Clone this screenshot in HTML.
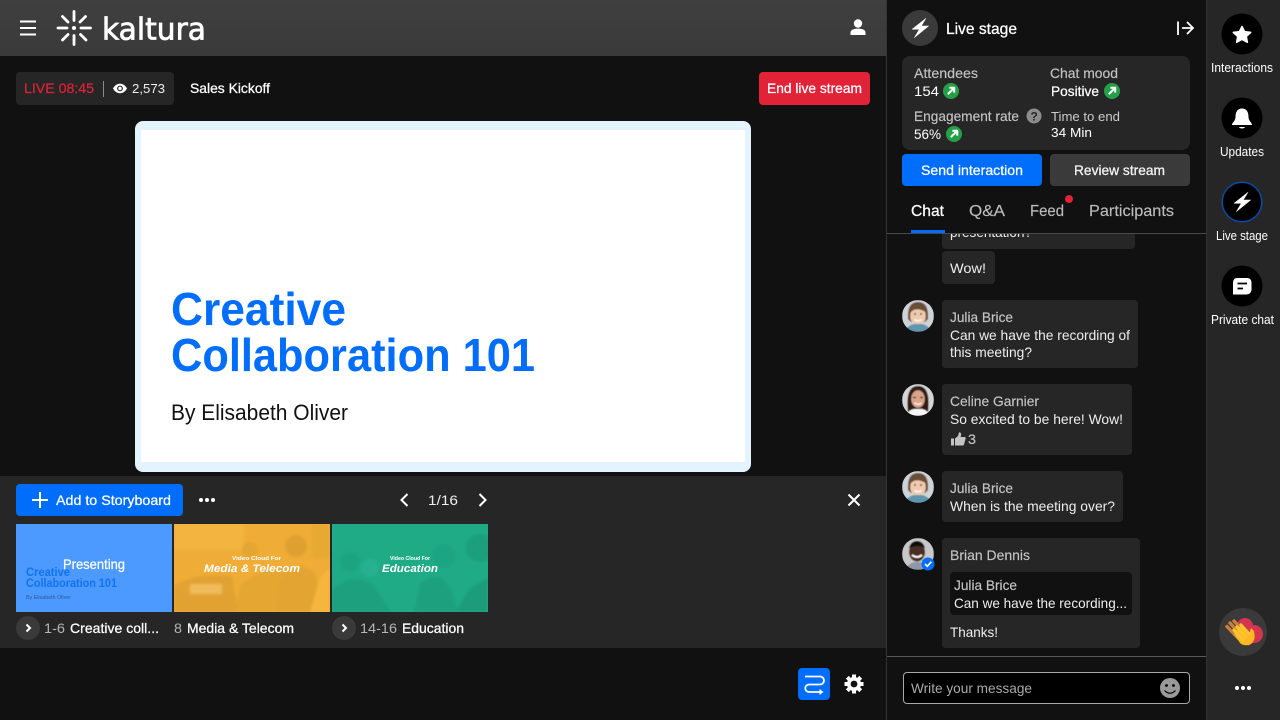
<!DOCTYPE html>
<html lang="en"><head><meta charset="utf-8"><title>Kaltura Live</title>
<style>
html,body{margin:0;padding:0;width:1280px;height:720px;overflow:hidden;background:#111}
svg{display:block}
text{font-family:"Liberation Sans",Arial,sans-serif;font-size:14px;fill:#fff;white-space:pre}
.m{stroke:#fff;stroke-width:.25}
.g{fill:#c4c4c4;stroke:#c4c4c4;stroke-width:.15}
.b{font-weight:bold}
.s13{font-size:13px}.s12{font-size:13px}.s16{font-size:16px}
</style></head><body>
<svg width="1280" height="720" viewBox="0 0 1280 720" xmlns="http://www.w3.org/2000/svg">
<defs>
<linearGradient id="hd" x1="0" y1="0" x2="0" y2="1"><stop offset="0" stop-color="#3f3f3f"/><stop offset="1" stop-color="#3a3a3a"/></linearGradient>
<filter id="bl" x="-10%" y="-10%" width="120%" height="120%"><feGaussianBlur stdDeviation="0.45"/></filter>
<filter id="bl2" x="-10%" y="-10%" width="120%" height="120%"><feGaussianBlur stdDeviation="1.2"/></filter>
<clipPath id="chatclip"><rect x="887" y="234" width="319" height="422"/></clipPath>
<clipPath id="a1"><circle cx="918" cy="316" r="16"/></clipPath>
<clipPath id="a2"><circle cx="918" cy="400" r="16"/></clipPath>
<clipPath id="a3"><circle cx="918" cy="487" r="16"/></clipPath>
<clipPath id="a4"><circle cx="918" cy="554" r="16"/></clipPath>
<clipPath id="t2"><rect x="174" y="524" width="156" height="88"/></clipPath>
<clipPath id="t3"><rect x="332" y="524" width="156" height="88"/></clipPath>
<g id="up"><path d="M-3.2 3.2L3 -3M-1.6 -3.200H3.200V1.600" fill="none" stroke="#fff" stroke-width="2"/></g>
<g id="julia"><rect x="-16" y="-16" width="32" height="32" fill="#cdd3d8"/>
<path d="M-10 3Q-11 -14 0 -14T10 3L7 6H-7Z" fill="#6b4d36"/>
<ellipse cx="0" cy="0" rx="7.800" ry="9.800" fill="#efc9ae"/>
<path d="M-7.800 -3Q-3 -10 7.800 -4Q5 -12 -1 -12Q-8 -10 -7.800 -3Z" fill="#6b4d36"/>
<circle cx="-3" cy="-2" r=".9" fill="#3a2a20"/><circle cx="3" cy="-2" r=".9" fill="#3a2a20"/>
<path d="M-14 16Q-10 9 -4 8H4Q10 9 14 16Z" fill="#5f95ad"/>
<path d="M-3.500 3.500Q0 6 3.500 3.500" stroke="#fff" stroke-width="1.500" fill="none"/></g>
</defs>

<rect width="1280" height="720" fill="#111"/>
<!-- header -->
<rect width="886" height="56" fill="url(#hd)"/>
<path d="M20 21.500H36M20 28H36M20 34.500H36" stroke="#fff" stroke-width="2"/>
<g stroke="#fff" stroke-width="2.800" stroke-linecap="round">
<path d="M74 11.500V20.500M74 35.500V44.500M58 28H67M81 28H90.500M62.500 16.500L68 22M80.500 34.500L86 40M62.500 40L68 34.500M80 22L85.500 16.500"/>
</g>
<circle cx="74" cy="28" r="2" fill="#fff"/>
<text x="102" y="39.500" style="font-family:'DejaVu Sans',sans-serif;font-size:30px;stroke:#fff;stroke-width:.7" textLength="104" lengthAdjust="spacingAndGlyphs">kaltura</text>
<circle cx="858" cy="23.500" r="4.200" fill="#fff"/>
<path d="M850.500 35V32.500C850.500 29.800 854 28.600 858 28.600S865.500 29.800 865.500 32.500V35Z" fill="#fff"/>

<!-- live bar -->
<rect x="16" y="72" width="158" height="33" rx="4" fill="#262626"/>
<text x="24" y="93" style="fill:#e12237;stroke:#e12237;stroke-width:.2" textLength="70" lengthAdjust="spacingAndGlyphs">LIVE 08:45</text>
<rect x="103" y="81" width="1" height="16" fill="#8a8a8a"/>
<path d="M113 88.500C115 85 117.500 83.800 120 83.800S125 85 127 88.500C125 92 122.500 93.200 120 93.200S115 92 113 88.500Z" fill="#fff"/>
<circle cx="120" cy="88.500" r="2.900" fill="#262626"/><circle cx="120" cy="88.500" r="1.700" fill="#fff"/>
<text x="132" y="93" class="s13" style="fill:#eee" textLength="33" lengthAdjust="spacingAndGlyphs">2,573</text>
<text x="190" y="93" class="m" textLength="80" lengthAdjust="spacingAndGlyphs">Sales Kickoff</text>
<rect x="759" y="72" width="111" height="33" rx="4" fill="#e12237"/>
<text x="767" y="93" class="m" textLength="95" lengthAdjust="spacingAndGlyphs">End live stream</text>

<!-- slide -->
<rect x="135" y="121" width="616" height="351" rx="8" fill="#e3f4fe"/>
<rect x="141" y="130" width="604" height="332" fill="#fff"/>
<text x="171" y="325" class="b" style="font-size:46px;fill:#006efa" textLength="175" lengthAdjust="spacingAndGlyphs">Creative</text>
<text x="171" y="371" class="b" style="font-size:46px;fill:#006efa" textLength="364" lengthAdjust="spacingAndGlyphs">Collaboration 101</text>
<text x="171" y="420" style="font-size:22px;fill:#111" textLength="177" lengthAdjust="spacingAndGlyphs">By Elisabeth Oliver</text>

<!-- storyboard strip -->
<rect x="0" y="476" width="886" height="172" fill="#262626"/>
<rect x="16" y="484" width="167" height="32" rx="4" fill="#006efa"/>
<path d="M40 492V508M32 500H48" stroke="#fff" stroke-width="2"/>
<text x="56" y="505" class="m" textLength="115" lengthAdjust="spacingAndGlyphs">Add to Storyboard</text>
<circle cx="201" cy="500" r="2" fill="#fff"/><circle cx="207" cy="500" r="2" fill="#fff"/><circle cx="213" cy="500" r="2" fill="#fff"/>
<path d="M407.500 494L401.500 500L407.500 506M479.500 494L485.500 500L479.500 506" fill="none" stroke="#fff" stroke-width="2"/>
<text x="428" y="505" style="fill:#eee" textLength="30" lengthAdjust="spacingAndGlyphs">1/16</text>
<path d="M848.500 494.500L859.500 505.500M859.500 494.500L848.500 505.500" stroke="#fff" stroke-width="2"/>

<!-- thumb 1 -->
<rect x="16" y="524" width="156" height="88" fill="#4c9aff"/>
<text x="26" y="576" class="b" style="font-size:11.500px;fill:#1272f0" textLength="44" lengthAdjust="spacingAndGlyphs">Creative</text>
<text x="26" y="587" class="b" style="font-size:11.500px;fill:#1272f0" textLength="91" lengthAdjust="spacingAndGlyphs">Collaboration 101</text>
<text x="26" y="599" style="font-size:5.500px;fill:#2b5a9c" textLength="45" lengthAdjust="spacingAndGlyphs">By Elisabeth Oliver</text>
<text x="63" y="569" class="m" textLength="62" lengthAdjust="spacingAndGlyphs">Presenting</text>

<!-- thumb 2 -->
<rect x="174" y="524" width="156" height="88" fill="#efad37"/>
<g clip-path="url(#t2)"><g filter="url(#bl2)">
<rect x="174" y="524" width="70" height="26" fill="#f3b440"/>
<path d="M174 585Q200 572 232 576L238 612H174Z" fill="#e2a232"/>
<path d="M236 612L240 585Q262 566 290 570L306 612Z" fill="#e6a633"/>
<circle cx="296" cy="546" r="11" fill="#dfa030"/>
<path d="M280 582Q294 556 316 574L322 612H276Z" fill="#e4a432"/>
<circle cx="250" cy="550" r="8" fill="#e5a533"/>
<rect x="312" y="524" width="18" height="34" fill="#e8a932"/>
<path d="M320 578L330 568V612H310Z" fill="#f6b63c"/>
<rect x="190" y="584" width="32" height="10" fill="#f1bb5a"/>
</g></g>
<text x="232" y="560" class="b" style="font-size:5px" textLength="49" lengthAdjust="spacingAndGlyphs">Video Cloud For</text>
<text x="204" y="572" class="b" style="font-size:11px;font-style:italic" textLength="96" lengthAdjust="spacingAndGlyphs">Media &amp; Telecom</text>

<!-- thumb 3 -->
<rect x="332" y="524" width="156" height="88" fill="#20ab87"/>
<g clip-path="url(#t3)"><g filter="url(#bl2)">
<path d="M332 612V590Q350 572 372 584L392 612Z" fill="#1ca07d"/>
<circle cx="350" cy="562" r="10" fill="#1da481"/>
<circle cx="370" cy="568" r="9" fill="#27b08d"/>
<path d="M414 612L420 584Q440 566 452 592L458 612Z" fill="#1ba07e"/>
<circle cx="444" cy="556" r="12" fill="#1da582"/>
<circle cx="480" cy="548" r="14" fill="#1a9f7d"/>
<path d="M455 612L470 588L488 578V612Z" fill="#1a9c7a"/>
</g></g>
<text x="390" y="560" class="b" style="font-size:5px" textLength="40" lengthAdjust="spacingAndGlyphs">Video Cloud For</text>
<text x="382" y="572" class="b" style="font-size:11px;font-style:italic" textLength="56" lengthAdjust="spacingAndGlyphs">Education</text>

<!-- thumb labels -->
<circle cx="28" cy="628" r="12" fill="#3a3a3a"/>
<path d="M26.500 624.500L30 628L26.500 631.500" fill="none" stroke="#fff" stroke-width="2"/>
<text x="44" y="633" style="fill:#b5b5b5" textLength="21" lengthAdjust="spacingAndGlyphs">1-6</text>
<text x="70" y="633" class="m" textLength="89" lengthAdjust="spacingAndGlyphs">Creative coll...</text>
<text x="174" y="633" style="fill:#b5b5b5" textLength="8" lengthAdjust="spacingAndGlyphs">8</text>
<text x="187" y="633" class="m" textLength="107" lengthAdjust="spacingAndGlyphs">Media &amp; Telecom</text>
<circle cx="344" cy="628" r="12" fill="#3a3a3a"/>
<path d="M342.500 624.500L346 628L342.500 631.500" fill="none" stroke="#fff" stroke-width="2"/>
<text x="360" y="633" style="fill:#b5b5b5" textLength="37" lengthAdjust="spacingAndGlyphs">14-16</text>
<text x="402" y="633" class="m" textLength="62" lengthAdjust="spacingAndGlyphs">Education</text>

<!-- bottom controls -->
<rect x="798" y="668" width="32" height="32" rx="4" fill="#006efa"/>
<path d="M805 676.500H820A4 4 0 0 1 820 684.500H809A3.700 3.700 0 0 0 809 692H820" fill="none" stroke="#fff" stroke-width="1.800"/>
<path d="M819.500 689L823.500 692L819.500 695Z" fill="#fff"/>
<g fill="#fff"><rect x="852" y="674.500" width="4" height="19"/><rect x="852" y="674.500" width="4" height="19" transform="rotate(45 854 684)"/><rect x="852" y="674.500" width="4" height="19" transform="rotate(90 854 684)"/><rect x="852" y="674.500" width="4" height="19" transform="rotate(135 854 684)"/></g>
<circle cx="854" cy="684" r="7" fill="#fff"/><circle cx="854" cy="684" r="3.400" fill="#111"/>

<!-- right panel -->
<rect x="886" y="0" width="1" height="720" fill="#333"/>
<circle cx="920" cy="28" r="18" fill="#3a3a3a"/>
<path d="M926 18.300L912 29.300H919.300L914.300 37.700L928.700 26H921.300Z" fill="#fff" stroke="#fff" stroke-width=".5" stroke-linejoin="round"/>
<text x="946" y="34" class="s16 m" textLength="71" lengthAdjust="spacingAndGlyphs">Live stage</text>
<path d="M1178 21.500V35M1182 28H1192.500M1187 22L1193 28L1187 34" fill="none" stroke="#fff" stroke-width="1.800"/>

<rect x="902" y="56" width="288" height="94" rx="8" fill="#262626"/>
<text x="914" y="78" class="g" textLength="64" lengthAdjust="spacingAndGlyphs">Attendees</text>
<text x="914" y="96" textLength="25" lengthAdjust="spacingAndGlyphs">154</text>
<circle cx="951" cy="91" r="8" fill="#24a148"/><use href="#up" x="951" y="91"/>
<text x="1050" y="78" class="g" textLength="68" lengthAdjust="spacingAndGlyphs">Chat mood</text>
<text x="1051" y="96" class="m" textLength="48" lengthAdjust="spacingAndGlyphs">Positive</text>
<circle cx="1112" cy="91" r="8" fill="#24a148"/><use href="#up" x="1112" y="91"/>
<text x="914" y="121" class="g" textLength="105" lengthAdjust="spacingAndGlyphs">Engagement rate</text>
<circle cx="1034" cy="116" r="7.500" fill="#8c8c8c"/>
<text x="1030.500" y="120.500" class="b" style="font-size:12px;fill:#262626">?</text>
<text x="1051" y="121" class="s13" style="fill:#ccc" textLength="69" lengthAdjust="spacingAndGlyphs">Time to end</text>
<text x="914" y="139" textLength="27" lengthAdjust="spacingAndGlyphs">56%</text>
<circle cx="954" cy="134" r="8" fill="#24a148"/><use href="#up" x="954" y="134"/>
<text x="1051" y="137" class="s13" textLength="41" lengthAdjust="spacingAndGlyphs">34 Min</text>

<rect x="902" y="154" width="140" height="32" rx="4" fill="#006efa"/>
<text x="921" y="175" class="m" textLength="102" lengthAdjust="spacingAndGlyphs">Send interaction</text>
<rect x="1050" y="154" width="140" height="32" rx="4" fill="#3a3a3a"/>
<text x="1074" y="175" class="m" style="fill:#f0f0f0" textLength="91" lengthAdjust="spacingAndGlyphs">Review stream</text>

<text x="911" y="216" class="s16 m" textLength="33" lengthAdjust="spacingAndGlyphs">Chat</text>
<text x="969" y="216" class="s16" style="fill:#bbb;stroke:#bbb;stroke-width:.15" textLength="36" lengthAdjust="spacingAndGlyphs">Q&amp;A</text>
<text x="1030" y="216" class="s16" style="fill:#bbb;stroke:#bbb;stroke-width:.15" textLength="34" lengthAdjust="spacingAndGlyphs">Feed</text>
<circle cx="1069" cy="199" r="4" fill="#e12237"/>
<text x="1089" y="216" class="s16" style="fill:#bbb;stroke:#bbb;stroke-width:.15" textLength="85" lengthAdjust="spacingAndGlyphs">Participants</text>
<rect x="887" y="233" width="319" height="1" fill="#4a4a4a"/>
<rect x="911" y="230" width="34" height="3" fill="#006efa"/>

<!-- chat -->
<g clip-path="url(#chatclip)">
<rect x="942" y="220" width="193" height="29" rx="4" fill="#262626"/>
<text x="950" y="237" style="fill:#eee" textLength="82" lengthAdjust="spacingAndGlyphs">presentation?</text>
</g>
<rect x="942" y="251" width="53" height="33" rx="4" fill="#262626"/>
<text x="950" y="273" style="fill:#eee" textLength="36" lengthAdjust="spacingAndGlyphs">Wow!</text>

<g clip-path="url(#a1)"><g filter="url(#bl)"><use href="#julia" x="918" y="316"/></g></g>
<rect x="942" y="300" width="196" height="68" rx="4" fill="#262626"/>
<text x="950" y="322" class="g" textLength="63" lengthAdjust="spacingAndGlyphs">Julia Brice</text>
<text x="950" y="340" style="fill:#eee" textLength="180" lengthAdjust="spacingAndGlyphs">Can we have the recording of</text>
<text x="950" y="357" style="fill:#eee" textLength="82" lengthAdjust="spacingAndGlyphs">this meeting?</text>

<g clip-path="url(#a2)"><g filter="url(#bl)"><rect x="902" y="384" width="32" height="32" fill="#d5d5d8"/>
<path d="M908 412Q905 386 918 386T928 412Z" fill="#2e1f18"/>
<ellipse cx="918" cy="399" rx="6.800" ry="8.800" fill="#d9a489"/>
<path d="M913 397.500H916M920 397.500H923" stroke="#3a2a20" stroke-width="1.300"/>
<path d="M905 416Q910 409 914 409H922Q926 409 931 416Z" fill="#f6f6f6"/><path d="M914.500 403Q918 405.500 921.500 403" stroke="#fff" stroke-width="1.300" fill="none"/></g></g>
<rect x="942" y="384" width="190" height="71" rx="4" fill="#262626"/>
<text x="950" y="406" class="g" textLength="89" lengthAdjust="spacingAndGlyphs">Celine Garnier</text>
<text x="950" y="424" style="fill:#eee" textLength="173" lengthAdjust="spacingAndGlyphs">So excited to be here! Wow!</text>
<path d="M951 438.500H954V445.500H951ZM955 438.500L958 436L959 432.500C960.500 432 961.500 433.500 961 435.500L960.500 437H964.500C965.500 437 966 438 965.500 439L964 444.500C963.500 445.500 963 445.500 962 445.500H955Z" fill="#c4c4c4"/>
<text x="968" y="444" class="g" textLength="8" lengthAdjust="spacingAndGlyphs">3</text>

<g clip-path="url(#a3)"><g filter="url(#bl)"><use href="#julia" x="918" y="487"/></g></g>
<rect x="942" y="471" width="181" height="51" rx="4" fill="#262626"/>
<text x="950" y="493" class="g" textLength="63" lengthAdjust="spacingAndGlyphs">Julia Brice</text>
<text x="950" y="511" style="fill:#eee" textLength="165" lengthAdjust="spacingAndGlyphs">When is the meeting over?</text>

<g clip-path="url(#a4)"><g filter="url(#bl)"><rect x="902" y="538" width="32" height="32" fill="#c8c8c8"/>
<ellipse cx="917" cy="552" rx="8" ry="9.500" fill="#4a2f22"/><path d="M909 548Q911 541 917 541T925 548Q918 544 909 548Z" fill="#111"/>
<path d="M912 555Q917 559 922 555" stroke="#fff" stroke-width="1.800" fill="none"/>
<path d="M905 570Q909 562 917 562T930 570Z" fill="#8d97a8"/></g></g>
<circle cx="928" cy="564" r="6.500" fill="#006efa"/>
<path d="M925 564L927.300 566.300L931.300 561.800" fill="none" stroke="#fff" stroke-width="1.700"/>
<rect x="942" y="538" width="198" height="110" rx="4" fill="#262626"/>
<text x="950" y="560" class="g" textLength="80" lengthAdjust="spacingAndGlyphs">Brian Dennis</text>
<rect x="950" y="572" width="182" height="43" rx="4" fill="#111"/>
<text x="954" y="590" class="g" textLength="63" lengthAdjust="spacingAndGlyphs">Julia Brice</text>
<text x="954" y="608" style="fill:#eee" textLength="173" lengthAdjust="spacingAndGlyphs">Can we have the recording...</text>
<text x="950" y="637" style="fill:#eee" textLength="48" lengthAdjust="spacingAndGlyphs">Thanks!</text>

<rect x="887" y="656" width="319" height="1" fill="#5a5a5a"/>
<rect x="903.500" y="672.500" width="286" height="31" rx="3.500" fill="#000" stroke="#a8a8a8"/>
<text x="911" y="693" style="fill:#aaa" textLength="121" lengthAdjust="spacingAndGlyphs">Write your message</text>
<circle cx="1170" cy="688" r="10" fill="#999"/>
<circle cx="1166.500" cy="685.500" r="1.400" fill="#000"/><circle cx="1173.500" cy="685.500" r="1.400" fill="#000"/>
<path d="M1164.500 690.500Q1170 696 1175.500 690.500" fill="none" stroke="#000" stroke-width="1.200"/>

<!-- right rail -->
<rect x="1206" y="0" width="74" height="720" fill="#262626"/>
<rect x="1206" y="0" width="1" height="720" fill="#333"/>
<circle cx="1242" cy="34" r="20.500" fill="#000"/>
<path d="M1242 26.500L1244.600 31.600L1250.700 32.400L1246.300 36.500L1247.400 42.300L1242 39.400L1236.600 42.300L1237.700 36.500L1233.300 32.400L1239.400 31.600Z" fill="#fff" stroke="#fff" stroke-width="1.500" stroke-linejoin="round"/>
<text x="1211" y="72" class="s12" textLength="62" lengthAdjust="spacingAndGlyphs">Interactions</text>
<circle cx="1242" cy="118" r="20.500" fill="#000"/>
<path d="M1242 108.500C1247 108.500 1248.500 112.500 1248.500 117C1248.500 121 1252 122.500 1252 125H1232C1232 122.500 1235.500 121 1235.500 117C1235.500 112.500 1237 108.500 1242 108.500Z" fill="#fff"/>
<path d="M1239 127H1245C1244.500 129 1239.500 129 1239 127Z" fill="#fff"/>
<text x="1220" y="156" class="s12" textLength="44" lengthAdjust="spacingAndGlyphs">Updates</text>
<circle cx="1242" cy="202" r="19.800" fill="#000" stroke="#0a4ba8" stroke-width="1.500"/>
<path d="M1248 192.300L1234 203.300H1241.300L1236.300 211.700L1250.700 200H1243.300Z" fill="#fff" stroke="#fff" stroke-width=".5" stroke-linejoin="round"/>
<text x="1216" y="240" class="s12" textLength="52" lengthAdjust="spacingAndGlyphs">Live stage</text>
<circle cx="1242" cy="286" r="20.500" fill="#000"/>
<path d="M1237 278H1247C1250 278 1251.500 280 1251.500 283V289C1251.500 292.500 1249.500 294.500 1246 294.500H1233V283C1233 280 1234.500 278 1237 278Z" fill="#fff"/>
<path d="M1237.500 283.500H1247M1237.500 288.500H1243" stroke="#000" stroke-width="1.800"/>
<text x="1211" y="324" class="s12" textLength="63" lengthAdjust="spacingAndGlyphs">Private chat</text>

<circle cx="1243" cy="632" r="24" fill="#3a3a3a"/>
<circle cx="1245" cy="626" r="8" fill="#d5354f"/><circle cx="1254" cy="634" r="9" fill="#d5354f"/>
<path d="M1240 628L1258 640L1248 646Z" fill="#d5354f"/>
<path d="M1227 626.500L1238 638M1230 623L1241 635M1234 621L1244 632" stroke="#c9803f" stroke-width="3.400" stroke-linecap="round"/>
<path d="M1234 634L1240 643C1243 646 1249 646 1252 643C1255 640 1255 636 1254 631L1251 628L1249 634L1240 626Z" fill="#fdb91f"/>
<path d="M1234 630L1243 640M1237 627L1246 637M1241 625L1249 634" stroke="#fdc42f" stroke-width="3.200" stroke-linecap="round"/>
<circle cx="1237" cy="688" r="2" fill="#fff"/><circle cx="1243" cy="688" r="2" fill="#fff"/><circle cx="1249" cy="688" r="2" fill="#fff"/>
</svg>
</body></html>
